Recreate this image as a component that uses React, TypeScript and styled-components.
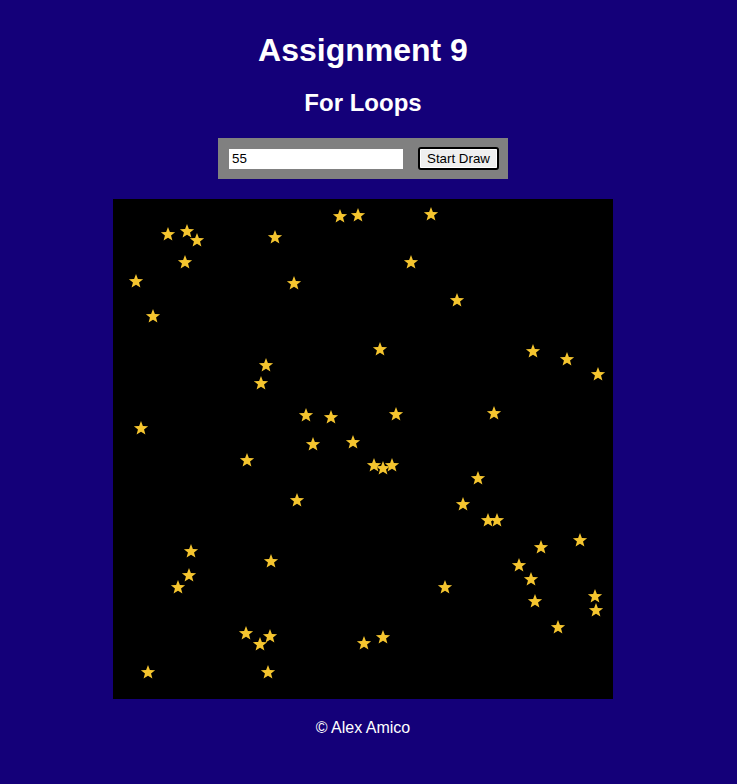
import React from "react";
import styled, { createGlobalStyle } from "styled-components";

const GlobalStyle = createGlobalStyle`
  html, body {
    margin: 0;
    padding: 0;
    background: #140079;
  }
  body {
    font-family: "Liberation Sans", Arial, sans-serif;
    color: #ffffff;
  }
`;

const Page = styled.div`
  width: 726px;
  display: flex;
  flex-direction: column;
  align-items: center;
  min-height: 784px;
`;

const Title = styled.h1`
  margin: 32px 0 0;
  font-size: 32px;
  line-height: 37px;
  font-weight: bold;
`;

const Subtitle = styled.h2`
  margin: 20px 0 0;
  font-size: 24px;
  line-height: 28px;
  font-weight: bold;
`;

const Controls = styled.div`
  margin-top: 21px;
  width: 290px;
  height: 41px;
  box-sizing: border-box;
  background: #808080;
  display: flex;
  align-items: center;
  padding: 0 9px 0 11px;
  gap: 15px;
`;

const NumberInput = styled.input`
  width: 174px;
  height: 20px;
  box-sizing: border-box;
  border: none;
  outline: none;
  padding: 0 3px;
  font-family: "Liberation Sans", Arial, sans-serif;
  font-size: 13.33px;
  color: #000;
  background: #fff;
`;

const DrawButton = styled.button`
  width: 81px;
  height: 23px;
  box-sizing: border-box;
  border: 2px solid #000;
  outline: 1px solid #fff;
  outline-offset: -3px;
  border-radius: 3px;
  background: #efefef;
  font-family: "Liberation Sans", Arial, sans-serif;
  font-size: 13.33px;
  color: #000;
  padding: 0;
`;

const Canvas = styled.svg`
  margin-top: 20px;
  display: block;
  background: #000;
`;

const Footer = styled.p`
  margin: 20px 0 0;
  font-size: 16px;
  line-height: 18px;
`;

const STARS: [number, number][] = [
  [168, 234], [187, 231], [197, 240], [275, 237], [340, 216], [358, 215],
  [431, 214], [185, 262], [411, 262], [136, 281], [294, 283], [457, 300],
  [153, 316], [380, 349], [533, 351], [567, 359], [598, 374], [266, 365],
  [261, 383], [141, 428], [306, 415], [331, 417], [396, 414], [494, 413],
  [313, 444], [353, 442], [247, 460], [374, 465], [383, 468], [392, 465],
  [478, 478], [297, 500], [463, 504], [488, 520], [497, 520], [541, 547],
  [580, 540], [191, 551], [271, 561], [519, 565], [189, 575], [531, 579],
  [178, 587], [445, 587], [535, 601], [595, 596], [596, 610], [558, 627],
  [246, 633], [270, 636], [260, 644], [364, 643], [383, 637], [148, 672],
  [268, 672],
];

function starPoints(cx: number, cy: number, R: number, r: number): string {
  const pts: string[] = [];
  for (let i = 0; i < 10; i++) {
    const rad = i % 2 === 0 ? R : r;
    const a = -Math.PI / 2 + (i * Math.PI) / 5;
    pts.push(`${(cx + rad * Math.cos(a)).toFixed(2)},${(cy + rad * Math.sin(a)).toFixed(2)}`);
  }
  return pts.join(" ");
}

export default function App() {
  return (
    <>
      <GlobalStyle />
      <Page>
        <Title>Assignment 9</Title>
        <Subtitle>For Loops</Subtitle>
        <Controls>
          <NumberInput type="text" defaultValue="55" />
          <DrawButton type="button">Start Draw</DrawButton>
        </Controls>
        <Canvas width={500} height={500} viewBox="0 0 500 500">
          {STARS.map(([x, y], i) => (
            <polygon
              key={i}
              points={starPoints(x - 113, y - 199 + 0.5, 7.5, 3.2)}
              fill="#f5c52f"
            />
          ))}
        </Canvas>
        <Footer>© Alex Amico</Footer>
      </Page>
    </>
  );
}
